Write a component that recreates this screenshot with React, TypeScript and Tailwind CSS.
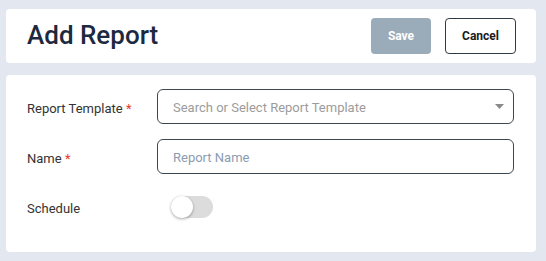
import React from "react";

export default function App() {
  return (
    <div
      className="w-[546px] h-[261px] bg-[#e3e8f0] pt-[9px] pl-[6px] pr-[10px] flex flex-col gap-[12px]"
      style={{ fontFamily: "Roboto, 'Noto Sans', sans-serif" }}
    >
      <div className="bg-white rounded-[4px] h-[54px] flex items-center justify-between pl-[21px] pr-[20px]">
        <h1 className="text-[26px] font-medium text-[#1c2940] leading-none -mt-[2px]">Add Report</h1>
        <div className="flex items-center gap-[14px]">
          <button className="w-[60px] h-[36px] rounded-[4px] bg-[#9aabb9] text-white text-[12px] font-bold">
            Save
          </button>
          <button className="w-[71px] h-[36px] rounded-[4px] border border-[#2f3b45] bg-white text-[#1a1a1a] text-[12px] font-bold">
            Cancel
          </button>
        </div>
      </div>
      <div className="bg-white rounded-[4px] h-[177px] pt-[14px] pl-[21px] pr-[22px] flex flex-col gap-[15px]">
        <div className="flex items-center h-[35px]">
          <div className="w-[130px] mt-[4px] text-[13px] text-[#333]">
            Report Template <span className="text-[#e53935]">*</span>
          </div>
          <div className="flex-1 h-[35px] rounded-[6px] border border-[#3b4852] flex items-center justify-between pl-[15px] pr-[9px]">
            <span className="mt-[2px] text-[13px] text-[#9c9c9c]">Search or Select Report Template</span>
            <svg width="9" height="5" viewBox="0 0 9 5">
              <path d="M0 0 L9 0 L4.5 5 Z" fill="#8a8a8a" />
            </svg>
          </div>
        </div>
        <div className="flex items-center h-[35px]">
          <div className="w-[130px] mt-[4px] text-[13px] text-[#333]">
            Name <span className="text-[#e53935]">*</span>
          </div>
          <div className="flex-1 h-[35px] rounded-[6px] border border-[#3b4852] flex items-center pl-[15px]">
            <span className="mt-[2px] text-[13px] text-[#8b9cb2]">Report Name</span>
          </div>
        </div>
        <div className="flex items-center h-[35px]">
          <div className="w-[130px] mt-[4px] text-[13px] text-[#333]">Schedule</div>
          <div className="ml-[14px] relative w-[42px] h-[22px] rounded-full bg-[#dcdcdc]">
            <div className="absolute left-0 top-0 w-[22px] h-[22px] rounded-full bg-white shadow-[0_1px_3px_rgba(0,0,0,0.35)]" />
          </div>
        </div>
      </div>
    </div>
  );
}
